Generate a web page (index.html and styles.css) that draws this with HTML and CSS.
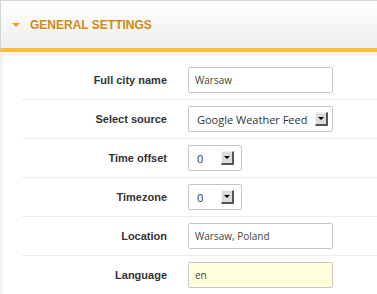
FILE: index.html
```html
<!DOCTYPE html>
<html>

<head>
  <link rel="stylesheet" href="styles.css">
</head>

<body>
  <div class="settings-panel">
    <div class="panel-head">
      <span class="caret"></span>
      <h3 class="panel-title">GENERAL SETTINGS</h3>
    </div>
    <div class="panel-body">
      <div class="form-body">
        <div class="form-row">
          <label class="row-label">Full city name</label>
          <input class="text-field" type="text" value="Warsaw">
        </div>
        <div class="form-row">
          <label class="row-label">Select source</label>
          <div class="drop wide"><span class="drop-text">Google Weather Feed</span><span class="drop-btn"></span></div>
        </div>
        <div class="form-row">
          <label class="row-label">Time offset</label>
          <div class="drop short"><span class="drop-text">0</span><span class="drop-btn"></span></div>
        </div>
        <div class="form-row">
          <label class="row-label">Timezone</label>
          <div class="drop short"><span class="drop-text">0</span><span class="drop-btn"></span></div>
        </div>
        <div class="form-row">
          <label class="row-label">Location</label>
          <input class="text-field" type="text" value="Warsaw, Poland">
        </div>
        <div class="form-row">
          <label class="row-label">Language</label>
          <input class="text-field lang" type="text" value="en">
        </div>
      </div>
    </div>
  </div>
</body>

</html>
```

FILE: styles.css
```css
html, body {
  margin: 0;
  background: #f3f3f3;
  overflow: hidden;
}

.settings-panel {
  font-family: "Liberation Sans", Arial, sans-serif;
}

.panel-head {
  height: 47px;
  display: flex;
  align-items: center;
  padding-left: 11px;
  border-top: 1px solid #d4d4d4;
  border-left: 1px solid #d4d4d4;
  border-bottom: 4px solid #fcbd37;
  background: linear-gradient(#ffffff, #eeeeee);
}

.caret {
  width: 0;
  height: 0;
  border-left: 4px solid transparent;
  border-right: 4px solid transparent;
  border-top: 4px solid #f5a21e;
  margin-right: 10px;
  margin-top: 1px;
}

.panel-title {
  margin: 0;
  font-size: 12px;
  font-weight: bold;
  color: #d08b12;
}

.panel-body {
  padding-top: 4px;
  padding-left: 3px;
}

.form-body {
  background: #fff;
  border-top-left-radius: 4px;
  padding-top: 5px;
  padding-left: 19px;
}

.form-row {
  display: grid;
  grid-template-columns: 145px 145px;
  column-gap: 21px;
  align-items: center;
  padding: 6px 0;
  border-bottom: 1px solid #ebebeb;
}

.row-label {
  text-align: right;
  font-size: 11px;
  font-weight: bold;
  color: #333;
}

.text-field {
  box-sizing: border-box;
  width: 145px;
  height: 26px;
  margin: 0;
  padding: 0 6px;
  border: 1px solid #c6c6c6;
  border-radius: 2px;
  font-family: "Open Sans", sans-serif;
  font-size: 10px;
  color: #444;
  background: #fff;
  outline: none;
}

.text-field.lang {
  background: #ffffdc;
}

.drop {
  box-sizing: border-box;
  height: 26px;
  display: flex;
  align-items: center;
  justify-content: space-between;
  padding: 0 4px 0 8px;
  border: 1px solid #c6c6c6;
  border-radius: 2px;
  font-family: "Open Sans", sans-serif;
  font-size: 11px;
  color: #333;
  background: #fff;
}

.drop.wide {
  width: 145px;
}

.drop.short {
  width: 54px;
  padding-right: 7px;
}

.drop-btn {
  box-sizing: border-box;
  width: 13px;
  height: 14px;
  display: flex;
  align-items: center;
  justify-content: center;
  background: #dcdcdc;
  border-style: solid;
  border-width: 1px 2px 2px 1px;
  border-color: #f4f4f4 #555 #555 #f4f4f4;
}

.drop-btn::after {
  content: "";
  width: 0;
  height: 0;
  border-left: 3px solid transparent;
  border-right: 3px solid transparent;
  border-top: 3px solid #000;
}
```
